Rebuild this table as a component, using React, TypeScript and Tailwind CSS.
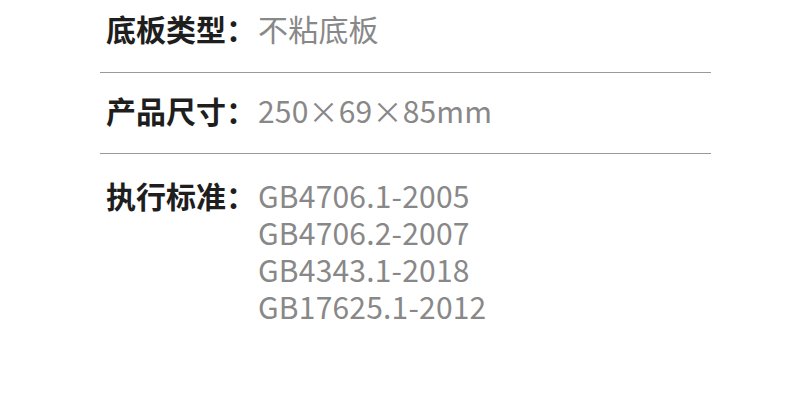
import React from 'react';

const rows: { label: string; values: string[]; pad: string }[] = [
  { label: '底板类型：', values: ['不粘底板'], pad: 'pt-[10px] pb-[25px] border-b border-[#999999]' },
  { label: '产品尺寸：', values: ['250×69×85mm'], pad: 'pt-[19px] pb-[24px] border-b border-[#999999]' },
  {
    label: '执行标准：',
    values: ['GB4706.1-2005', 'GB4706.2-2007', 'GB4343.1-2018', 'GB17625.1-2012'],
    pad: 'pt-[23px]',
  },
];

const App: React.FC = () => {
  return (
    <div
      className="w-[790px] h-[418px] bg-white overflow-hidden"
      style={{ fontFamily: '"Noto Sans CJK SC", "Noto Sans", sans-serif' }}
    >
      <div className="ml-[100px] w-[611px]">
        {rows.map((row) => (
          <div key={row.label} className={`flex pl-[6px] text-[30px] leading-[37px] ${row.pad}`}>
            <div className="w-[152px] shrink-0 font-bold text-[#1e1e1e]">{row.label}</div>
            <div className="flex flex-col text-[#888888] tracking-[0.2px]">
              {row.values.map((v) => (
                <span key={v}>{v}</span>
              ))}
            </div>
          </div>
        ))}
      </div>
    </div>
  );
};

export default App;
